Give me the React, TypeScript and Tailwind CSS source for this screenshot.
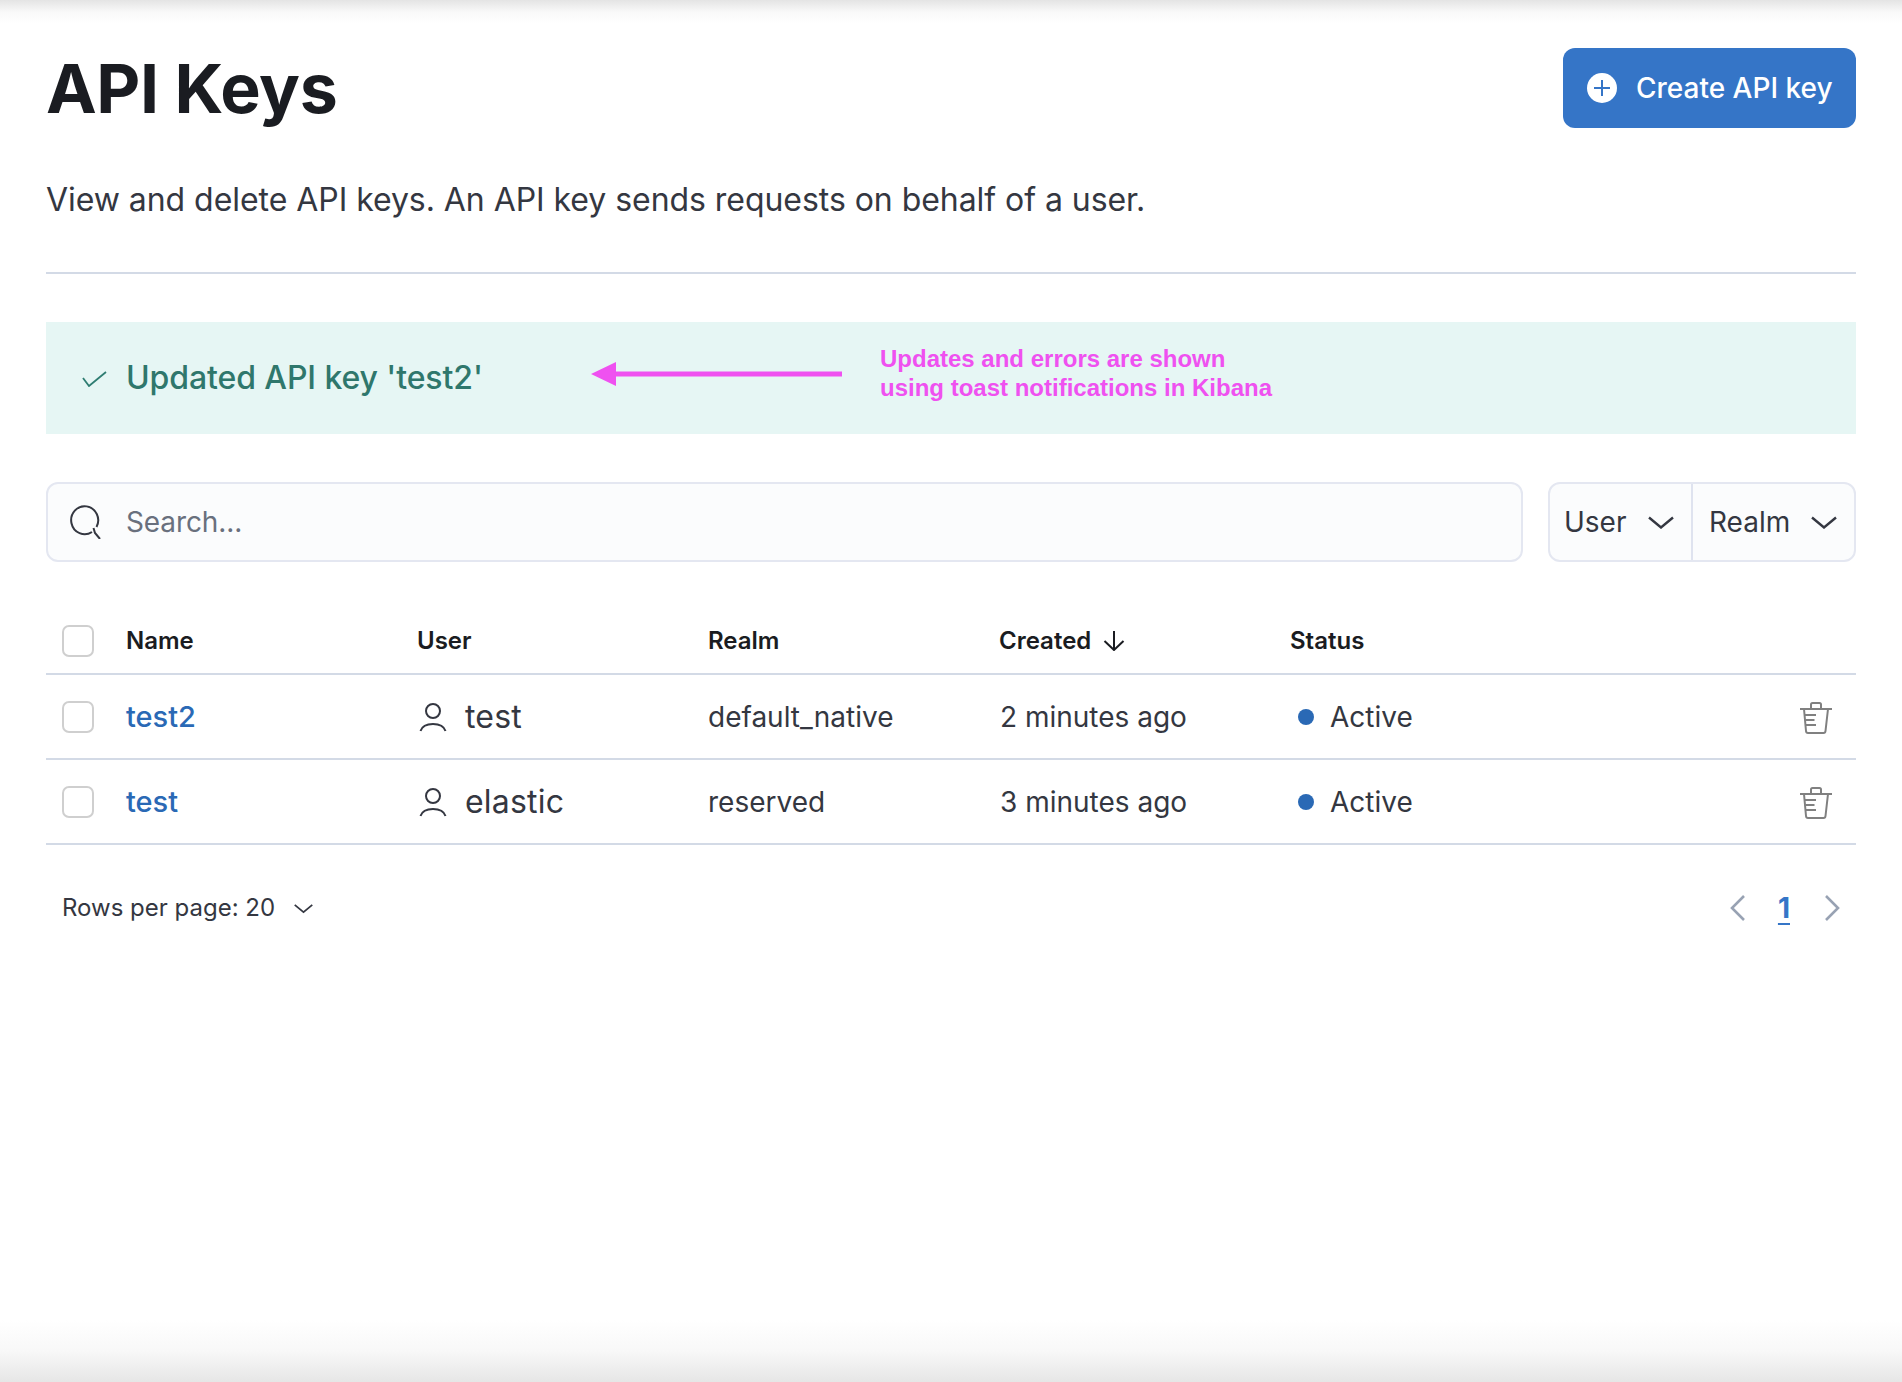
const Chevron = ({ className = "" }: { className?: string }) => (
  <svg viewBox="0 0 26 13" fill="none" stroke="currentColor" strokeWidth="2.4" className={className}>
    <path d="M1 1.500 13 11.500 25 1.500" />
  </svg>
);

const UserIcon = () => (
  <svg width="28" height="30" viewBox="0 0 28 30" fill="none" stroke="#343741" strokeWidth="2" className="shrink-0 ml-[2px]">
    <circle cx="14" cy="9" r="7" />
    <path d="M1.500 29C3 24.500 8 22 14 22s11 2.500 12.500 7" />
  </svg>
);

const TrashIcon = () => (
  <svg width="34" height="34" viewBox="0 0 34 34" fill="none" stroke="#808080" strokeWidth="2">
    <path d="M1 9h32" />
    <path d="M12 9V4.500C12 3.500 12.500 3 13.500 3h7C21.500 3 22 3.500 22 4.500V9" />
    <path d="M5 9l2 22c.1 1.400 1 2 2 2h15.500c1 0 1.900-.6 2-2L29 9" />
    <path d="M6 15h11M6.500 20h9M7 25h10" />
  </svg>
);

const Checkbox = () => (
  <div className="w-[32px] h-[32px] rounded-[7px] border-2 border-[#cfcfcf] bg-white" />
);

const rows = [
  { name: "test2", user: "test", realm: "default_native", created: "2 minutes ago" },
  { name: "test", user: "elastic", realm: "reserved", created: "3 minutes ago" },
];

const gridClass = "grid grid-cols-[80px_291px_291px_291px_291px_291px_1fr] items-center border-b-2 border-[#d3dae6]";

export default function App() {
  return (
    <div className="relative h-[1382px] bg-white overflow-hidden font-['Inter',sans-serif] text-[#343741]">
      <div className="absolute top-0 inset-x-0 h-[24px] bg-gradient-to-b from-[#e4e4e4] via-[#f9f9f9] to-white" />
      <div className="absolute bottom-0 inset-x-0 h-[62px] bg-gradient-to-t from-[#e6e6e6] via-[#f8f8f8] to-white" />

      <div className="relative px-[46px] pt-[48px]">
        <div className="flex items-center justify-between h-[80px]">
          <h1 className="text-[68px] leading-[80px] font-bold text-[#1a1c21] tracking-[-0.4px]">API Keys</h1>
          <button className="flex items-center gap-[19px] w-[293px] h-[80px] pl-[24px] rounded-[12px] bg-[#3575c7] text-white text-[28px] font-medium">
            <svg width="30" height="30" viewBox="0 0 30 30" className="shrink-0">
              <circle cx="15" cy="15" r="15" fill="#fff" />
              <path d="M15 7v16M7 15h16" stroke="#3575c7" strokeWidth="2" />
            </svg>
            <span>Create API key</span>
          </button>
        </div>

        <p className="mt-[50px] text-[32px] leading-[44px] tracking-[-0.05px]">View and delete API keys. An API key sends requests on behalf of a user.</p>

        <div className="mt-[50px] h-[2px] bg-[#d3dae6]" />

        <div className="mt-[48px] h-[112px] bg-[#e6f6f4] flex items-center pl-[36px]">
          <svg width="25" height="16" viewBox="0 0 25 16" fill="none" stroke="#2f7d72" strokeWidth="1.800" className="shrink-0 mt-[2px]">
            <path d="M1 7l6 8L24 1" />
          </svg>
          <span className="ml-[19px] w-[465px] shrink-0 text-[32px] tracking-[-0.1px] font-medium text-[#2f776c]">Updated API key 'test2'</span>
          <svg width="251" height="26" viewBox="0 0 251 26" className="shrink-0 -mt-[8px]">
            <path d="M0 13 25 1v9.500h226v5H25V25z" fill="#ef51f0" />
          </svg>
          <div className="ml-[38px] font-['Liberation_Sans',sans-serif] font-bold text-[24px] leading-[29px] text-[#ef51f0] -mt-[11px]">
            <div>Updates and errors are shown</div>
            <div>using toast notifications in Kibana</div>
          </div>
        </div>

        <div className="mt-[48px] flex gap-[25px] h-[80px]">
          <div className="flex-1 flex items-center rounded-[12px] border-2 border-[#e4e7f1] bg-[#fbfcfd] pl-[21px]">
            <svg width="34" height="34" viewBox="0 0 34 34" fill="none" stroke="#343741" strokeWidth="2" className="shrink-0">
              <path d="M23 27A13.500 14 0 1 1 27.500 22" />
              <path d="M24.500 23 26 28l5 6" />
            </svg>
            <span className="ml-[23px] text-[28px] text-[#69707d] tracking-[-0.1px]">Search...</span>
          </div>
          <div className="w-[308px] flex rounded-[12px] border-2 border-[#e4e7f1] bg-[#fbfcfd] text-[28px] font-normal">
            <div className="w-[143px] flex items-center justify-between pl-[14px] pr-[17px] border-r-2 border-[#dfe3ef]">
              <span>User</span>
              <Chevron className="w-[26px] h-[13px]" />
            </div>
            <div className="flex-1 flex items-center justify-between pl-[16px] pr-[17px]">
              <span>Realm</span>
              <Chevron className="w-[26px] h-[13px]" />
            </div>
          </div>
        </div>

        <div className="mt-[33px]">
          <div className={`${gridClass} h-[80px] text-[24px] font-semibold text-[#1a1c21] pt-[14px]`}>
            <div className="pl-[16px]"><Checkbox /></div>
            <div>Name</div>
            <div>User</div>
            <div>Realm</div>
            <div className="flex items-center gap-[12px]">
              <span>Created</span>
              <svg width="22" height="20" viewBox="0 0 22 20" fill="none" stroke="#1a1c21" strokeWidth="2">
                <path d="M11 0v19M1.500 10l9.500 9 9.500-9" />
              </svg>
            </div>
            <div>Status</div>
            <div />
          </div>
          {rows.map((r) => (
            <div key={r.name} className={`${gridClass} h-[85px] text-[28px]`}>
              <div className="pl-[16px]"><Checkbox /></div>
              <div className="text-[29px] font-medium text-[#2a69b5]">{r.name}</div>
              <div className="flex items-center gap-[18px]">
                <UserIcon />
                <span className="text-[32px] tracking-[0.2px]">{r.user}</span>
              </div>
              <div>{r.realm}</div>
              <div className="pl-[1px]">{r.created}</div>
              <div className="flex items-center pl-[8px] gap-[16px]">
                <span className="w-[16px] h-[16px] rounded-full bg-[#2a69b5]" />
                <span>Active</span>
              </div>
              <div className="flex justify-end pr-[23px]"><TrashIcon /></div>
            </div>
          ))}
        </div>

        <div className="mt-[47px] flex items-center justify-between h-[32px] pl-[16px] pr-[16px]">
          <div className="flex items-center gap-[19px] text-[24px]">
            <span>Rows per page: 20</span>
            <Chevron className="w-[19px] h-[11px]" />
          </div>
          <div className="flex items-center text-[#98a2b3]">
            <svg width="15" height="26" viewBox="0 0 15 26" fill="none" stroke="currentColor" strokeWidth="2.600"><path d="M14 1 2 13l12 12" /></svg>
            <span className="ml-[33px] mr-[35px] text-[28px] font-bold text-[#3575c7] underline underline-offset-[5px]">1</span>
            <svg width="15" height="26" viewBox="0 0 15 26" fill="none" stroke="currentColor" strokeWidth="2.600"><path d="M1 1l12 12L1 25" /></svg>
          </div>
        </div>
      </div>
    </div>
  );
}
